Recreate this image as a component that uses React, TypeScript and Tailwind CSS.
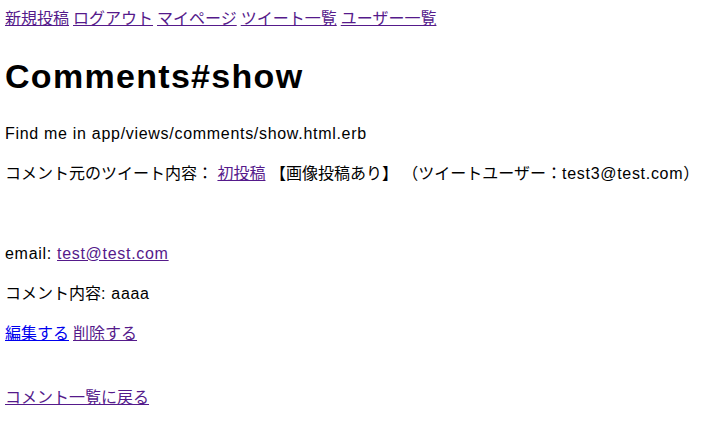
export default function App() {
  const ff = { fontFamily: '"Liberation Sans", "Noto Sans CJK JP", sans-serif' };
  const v = "text-[#551a8b] underline";
  const t = "tracking-[0.7px]";
  return (
    <div className="bg-white min-h-[440px] pl-[5px] pt-[7px] text-black text-[16px] leading-[24px]" style={ff}>
      <div className="flex gap-[4px]">
        <a className={v}>新規投稿</a>
        <a className={v}>ログアウト</a>
        <a className={v}>マイページ</a>
        <a className={v}>ツイート一覧</a>
        <a className={v}>ユーザー一覧</a>
      </div>
      <h1 className="text-[34px] leading-[48px] font-bold my-[21.44px] tracking-[1.3px]">Comments#show</h1>
      <p className={t}>Find me in app/views/comments/show.html.erb</p>
      <p className="mt-[16px]">
        コメント元のツイート内容： <a className={v}>初投稿</a> 【画像投稿あり】 （ツイートユーザー：<span className={t}>test3@test.com</span>）
      </p>
      <div className="h-[24px] mt-[16px]" />
      <p className={`mt-[16px] ${t}`}>
        email: <a className={v}>test@test.com</a>
      </p>
      <p className="mt-[16px]">コメント内容<span className={t}>: aaaa</span></p>
      <p className="mt-[16px] flex gap-[4px]">
        <a className="text-[#0000ee] underline">編集する</a>
        <a className={v}>削除する</a>
      </p>
      <div className="h-[24px] mt-[16px]" />
      <a className={v}>コメント一覧に戻る</a>
    </div>
  );
}
